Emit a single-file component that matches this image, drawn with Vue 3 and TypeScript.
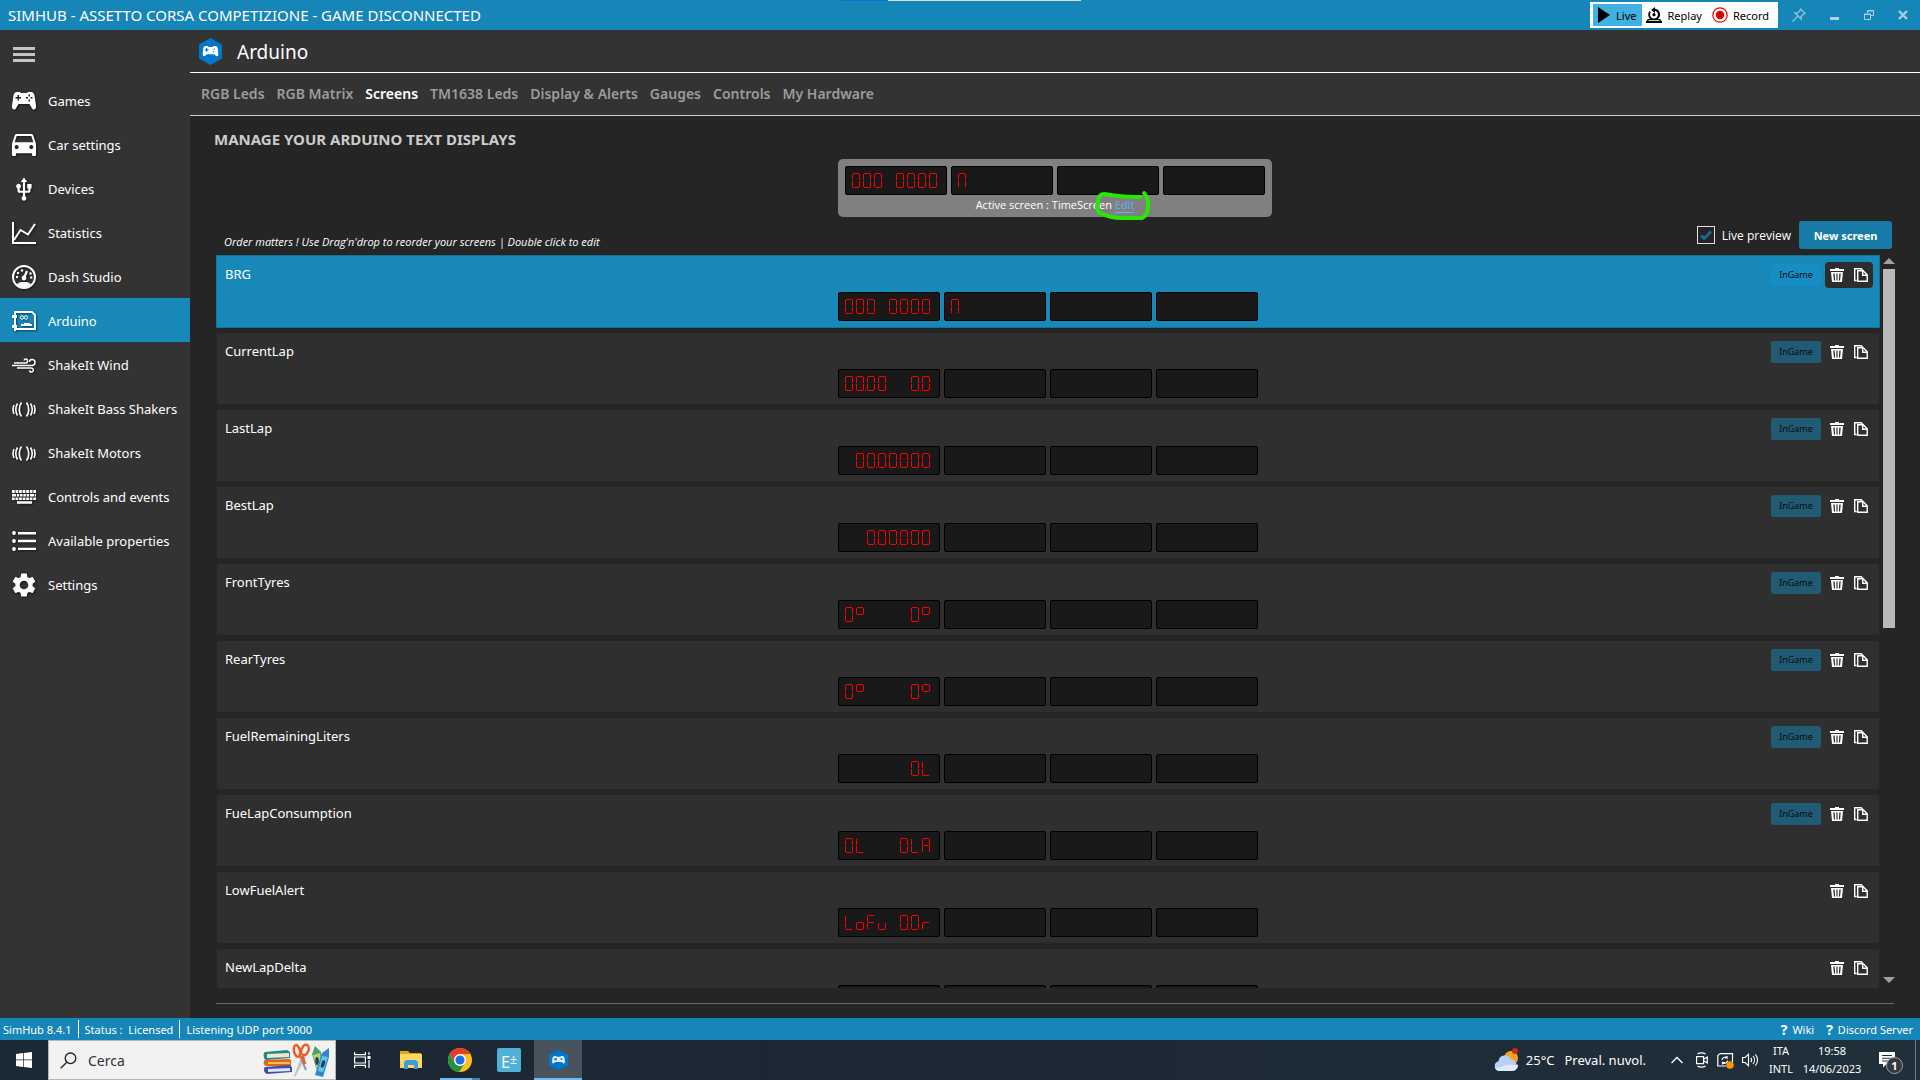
<script setup lang="ts">
import { ref } from 'vue'

interface Icon {
  box: string
  w: number
  h: number
  art: string
}
interface NavItem extends Icon {
  label: string
}
interface ScreenRow {
  name: string
  text: string[]
  inGame: boolean
}

const shaker =
  '<g fill="none" stroke="#fff" stroke-width="1.6"><path d="M9.500 .5C6.500 4.500 6.500 10.500 9.500 14.500M14.500 .5C17.500 4.500 17.500 10.500 14.500 14.500M5.500 1.500C3.500 5 3.500 10 5.500 13.500M18.500 1.500C20.500 5 20.500 10 18.500 13.500M2 3C.7 6 .7 9 2 12M22 3C23.300 6 23.300 9 22 12"/></g>'

const nav: NavItem[] = [
  {
    label: 'Games', box: '0 0 24 18', w: 24, h: 18,
    art: '<path fill="#fff" fill-rule="evenodd" d="M5 0h3l1 1h6l1-1h3c2 0 3 1.500 3.500 3.500L24 13.500c.3 2.500-.5 4-2 4-1 0-1.600-.6-2-1.300L17.500 12h-11L4 16.200c-.4.7-1 1.300-2 1.300-1.500 0-2.300-1.500-2-4L1.500 3.500C2 1.500 3 0 5 0zM5.500 3v2h-2v1.500h2v2H7v-2h2V5H7V3zM16.500 2.500v2h1.500v-2zm0 5v2h1.500v-2zM14 5v1.500h2V5zm4.500 0v1.500h2V5z"/>'
  },
  {
    label: 'Car settings', box: '3 5 18 16', w: 24, h: 22,
    art: '<path fill="#fff" d="M18.920 6.010C18.720 5.420 18.160 5 17.500 5h-11c-.66 0-1.210.42-1.420 1.010L3 12v8c0 .55.45 1 1 1h1c.55 0 1-.45 1-1v-1h12v1c0 .55.45 1 1 1h1c.55 0 1-.45 1-1v-8l-2.080-5.990zM6.500 16c-.83 0-1.500-.67-1.500-1.500S5.670 13 6.500 13s1.500.67 1.500 1.500S7.330 16 6.500 16zm11 0c-.83 0-1.500-.67-1.500-1.500s.67-1.500 1.500-1.500 1.500.67 1.500 1.500-.67 1.500-1.500 1.500zM5 11l1.500-4.500h11L19 11H5z"/>'
  },
  {
    label: 'Devices', box: '0 0.5 24 22', w: 26, h: 24,
    art: '<path fill="#fff" d="M15 7v4h1v2h-3V5h2l-3-4-3 4h2v8H8v-2.070c.7-.37 1.200-1.080 1.200-1.930 0-1.210-.99-2.200-2.200-2.200S4.800 7.790 4.800 9c0 .85.5 1.560 1.200 1.930V13c0 1.110.89 2 2 2h3v3.050c-.71.37-1.200 1.100-1.200 1.950 0 1.220.99 2.200 2.200 2.200s2.200-.98 2.200-2.200c0-.85-.49-1.580-1.200-1.950V15h3c1.110 0 2-.89 2-2v-2h1V7h-4z"/>'
  },
  {
    label: 'Statistics', box: '0 0 24 22', w: 24, h: 22,
    art: '<path fill="none" stroke="#fff" stroke-width="2" d="M1 0v21h23M2 18L8.500 8l7.500 4.500L23 2"/>'
  },
  {
    label: 'Dash Studio', box: '0 0 24 24', w: 24, h: 24,
    art: '<circle cx="12" cy="12" r="11" fill="none" stroke="#fff" stroke-width="2"/><path fill="#fff" d="M5 20c1-3 4-3 7-3s6 0 7 3c-2 2-4 3-7 3s-5-1-7-3z"/><path d="M12.500 12L15 6" stroke="#fff" stroke-width="2.200"/><circle cx="12" cy="13" r="2.400" fill="#fff"/><g fill="#fff"><circle cx="10" cy="5.500" r="1.200"/><circle cx="6" cy="8" r="1.200"/><circle cx="5" cy="12" r="1.200"/><circle cx="18.500" cy="8.500" r="1.200"/><circle cx="19.200" cy="12.500" r="1.200"/></g>'
  },
  {
    label: 'Arduino', box: '0 0 24 20', w: 24, h: 20,
    art: '<path fill="none" stroke="#fff" stroke-width="2" d="M3 1h17l3 3v14H4M3 0v20"/><path fill="#fff" d="M0 4h5v3H0zM0 14h5v3H0zM9 13h11v2H9zM12 12h6v1h-6z"/><circle cx="10" cy="6.500" r="1.700" fill="none" stroke="#fff"/><circle cx="14" cy="6.500" r="1.700" fill="none" stroke="#fff"/>'
  },
  {
    label: 'ShakeIt Wind', box: '0 0 24 15', w: 24, h: 15,
    art: '<path fill="none" stroke="#fff" stroke-width="1.500" d="M2 5h12c2 0 2-4 0-4-1 0-1.800.6-1.800 1.600M0 7.500h20c4 0 4-6 0-6-1.500 0-2.500 1-2.500 2.500M5 10h14c3 0 3 4 .5 4-1.200 0-2-.8-2-1.800"/>'
  },
  { label: 'ShakeIt Bass Shakers', box: '0 0 24 15', w: 24, h: 15, art: shaker },
  { label: 'ShakeIt Motors', box: '0 0 24 15', w: 24, h: 15, art: shaker },
  {
    label: 'Controls and events', box: '0 0 24 14', w: 24, h: 14,
    art: '<g stroke="#fff" fill="none"><path stroke-width="3" stroke-dasharray="2.700 .85" d="M0 1.500h24"/><path stroke-width="2.600" stroke-dasharray="4 .8 2.500 .8 2.500 .8 2.500 .8 2.500 .8" d="M0 5.300h24"/><path stroke-width="2.600" stroke-dasharray="2.700 .85" d="M0 8.700h24"/><path stroke-width="2.500" d="M5 12.500h15"/></g>'
  },
  {
    label: 'Available properties', box: '0 0 24 20', w: 24, h: 20,
    art: '<g fill="#fff"><circle cx="2" cy="2" r="1.900"/><circle cx="2" cy="10" r="1.900"/><circle cx="2" cy="18" r="1.900"/><path d="M6 1h18v2.400H6zM6 8.800h18v2.400H6zM6 16.700h18v2.400H6z"/></g>'
  },
  {
    label: 'Settings', box: '2 2 20 20', w: 24, h: 24,
    art: '<path fill="#fff" d="M19.140 12.940c.04-.3.06-.61.06-.94 0-.32-.02-.64-.07-.94l2.030-1.580c.18-.14.23-.41.12-.61l-1.920-3.320c-.12-.22-.37-.29-.59-.22l-2.390.96c-.5-.38-1.030-.7-1.620-.94l-.36-2.540c-.04-.24-.24-.41-.48-.41h-3.840c-.24 0-.43.17-.47.41l-.36 2.540c-.59.24-1.130.57-1.620.94l-2.390-.96c-.22-.08-.47 0-.59.22L2.740 8.870c-.12.21-.08.47.12.61l2.030 1.580c-.05.3-.09.63-.09.94s.02.64.07.94l-2.030 1.580c-.18.14-.23.41-.12.61l1.920 3.320c.12.22.37.29.59.22l2.390-.96c.5.38 1.030.7 1.620.94l.36 2.540c.05.24.24.41.48.41h3.840c.24 0 .44-.17.47-.41l.36-2.540c.59-.24 1.130-.56 1.620-.94l2.390.96c.22.08.47 0 .59-.22l1.920-3.320c.12-.22.07-.47-.12-.61l-2.010-1.580zM12 15.600c-1.980 0-3.600-1.620-3.600-3.600s1.620-3.600 3.600-3.600 3.600 1.620 3.600 3.600-1.620 3.600-3.600 3.600z"/>'
  }
]

const tabs = ['RGB Leds', 'RGB Matrix', 'Screens', 'TM1638 Leds', 'Display & Alerts', 'Gauges', 'Controls', 'My Hardware']
const activeNav = ref('Arduino')
const activeTab = ref('Screens')
const selected = ref('BRG')
const livePreview = ref(true)

const activeScreen = ['000 0000', 'N', '', '']
const screens: ScreenRow[] = [
  { name: 'BRG', text: ['000 0000', 'N', '', ''], inGame: true },
  { name: 'CurrentLap', text: ['00.00  0.0', '', '', ''], inGame: true },
  { name: 'LastLap', text: [' 00.00.000', '', '', ''], inGame: true },
  { name: 'BestLap', text: ['  0.00.000', '', '', ''], inGame: true },
  { name: 'FrontTyres', text: ['0°    0°', '', '', ''], inGame: true },
  { name: 'RearTyres', text: ['0°    0°', '', '', ''], inGame: true },
  { name: 'FuelRemainingLiters', text: ['      0L', '', '', ''], inGame: true },
  { name: 'FueLapConsumption', text: ['0L   0LA', '', '', ''], inGame: true },
  { name: 'LowFuelAlert', text: ['LoFu 0.0r', '', '', ''], inGame: false },
  { name: 'NewLapDelta', text: ['', '', '', ''], inGame: false }
]

// Lit LEDs of a seven segment digit, a (top) clockwise to f, g in the middle.
const segmentMap: Record<string, string> = {
  '0': 'abcdef', N: 'abcef', L: 'def', A: 'abcefg', o: 'cdeg', F: 'aefg', u: 'cde', r: 'eg', '°': 'abfg', ' ': ''
}

function digits(text: string): string[] {
  const out: string[] = []
  for (const ch of text) {
    if (ch === '.') out[out.length - 1] += 'p'
    else out.push(segmentMap[ch] ?? '')
  }
  return out
}
</script>

<template>
  <div class="desktop">
    <header class="titlebar">
      <span class="title">SIMHUB - ASSETTO CORSA COMPETIZIONE - GAME DISCONNECTED</span>
      <i class="behind"></i>
      <div class="modes">
        <button class="mode on">
          <svg width="12" height="16" viewBox="0 0 12 16"><path d="M0 0l12 8-12 8z" /></svg>Live
        </button>
        <button class="mode">
          <svg width="16" height="16" viewBox="0 0 16 16"><path d="M0 16v-1.500l2-2.500h2.200a5.800 5.800 0 0 1-.7-8l1.300 1.200A4 4 0 1 0 9 3.700V6L5 3l4-3v1.800a5.700 5.700 0 0 1 2.800 10.200H14l2 2.500V16z" /><circle cx="8" cy="7.700" r="1.600" /><path d="M2.500 13.500h11" stroke="#fff" stroke-width=".8" /></svg>Replay
        </button>
        <button class="mode">
          <svg width="16" height="16" viewBox="0 0 16 16"><circle cx="8" cy="8" r="7.200" fill="none" stroke="#e00000" stroke-width="1.200" /><circle cx="8" cy="8" r="4.200" fill="#e00000" /></svg>Record
        </button>
      </div>
      <div class="winbtns">
        <button aria-label="Pin"><svg width="14" height="14" viewBox="0 0 14 14" fill="none" stroke="#8cc6de" stroke-width="1.300"><path d="M8.500 1l4.500 4.500-1.500.5-2.500 2.500.2 2.500L3 5l2.500.2L8 2.500zM5.500 8.500L.5 13.500" /></svg></button>
        <button aria-label="Minimize"><svg width="10" height="10" viewBox="0 0 10 10"><path d="M0 7h9v3H0z" fill="#a9d3e6" /></svg></button>
        <button aria-label="Restore"><svg width="10" height="10" viewBox="0 0 10 10" fill="none" stroke="#a9d3e6"><path d="M3.500 3V.5h6v5H7M.5 4.500h6v5h-6zM3 1h7M0 4h7" /></svg></button>
        <button aria-label="Close"><svg width="10" height="10" viewBox="0 0 10 10"><path d="M1 1l8 8M9 1L1 9" stroke="#a9d3e6" stroke-width="2.200" /></svg></button>
      </div>
    </header>

    <div class="body">
      <nav class="sidebar">
        <button class="burger" aria-label="Menu"><i></i><i></i><i></i></button>
        <a v-for="item in nav" :key="item.label" href="#" class="nav" :class="{ on: item.label === activeNav }" @click.prevent="activeNav = item.label">
          <span class="navicon"><svg :viewBox="item.box" :width="item.w" :height="item.h" preserveAspectRatio="none" v-html="item.art"></svg></span>
          <span>{{ item.label }}</span>
        </a>
      </nav>

      <main class="main">
        <div class="head">
          <svg width="23" height="27" viewBox="0 0 23 27"><path d="M11.500 0L23 6.500v14L11.500 27 0 20.500v-14z" fill="#0077cd" /><path fill="#fff" fill-rule="evenodd" d="M6.500 8h2l1 1h4l1-1h2c1.500 0 2 1.500 2.300 3l.5 5c0 1.500-.5 2.200-1.400 2.200-1.300 0-1.700-2-3.400-2h-6c-1.700 0-2.100 2-3.400 2-.9 0-1.400-.7-1.400-2.200l.5-5C4.500 9.500 5 8 6.500 8zM7 10v1.300H5.800v1.200H7v1.300h1.200v-1.300h1.300v-1.200H8.200V10zM14.500 10.500v1.300h1.300v-1.300zM14 13v1h1v-1z" /></svg>
          <h1>Arduino</h1>
        </div>
        <div class="tabs">
          <a v-for="t in tabs" :key="t" href="#" :class="{ on: t === activeTab }" @click.prevent="activeTab = t">{{ t }}</a>
        </div>

        <section class="content">
          <h2>MANAGE YOUR ARDUINO TEXT DISPLAYS</h2>

          <div class="active">
            <div class="leds">
              <div v-for="(cell, i) in activeScreen" :key="i" class="led" role="img" :aria-label="cell || 'blank'">
                <span v-for="(d, n) in digits(cell)" :key="n" class="digit"><i v-for="s in d" :key="s" :class="s"></i></span>
              </div>
            </div>
            <p>Active screen : TimeScreen <a href="#">Edit</a></p>
            <svg class="scribble" width="62" height="36" viewBox="0 0 62 36"><path d="M48 9Q28 9 12 6Q6 6 6 15Q4 23 8 25Q18 30 30 30L50 30Q56 27 56 19Q57 11 52 5" /></svg>
          </div>

          <div class="toolbar">
            <em>Order matters ! Use Drag'n'drop to reorder your screens | Double click to edit</em>
            <label class="check"><input v-model="livePreview" type="checkbox" /><svg width="18" height="18" viewBox="0 0 18 18"><path v-if="livePreview" d="M3.500 9.500l3.500 3.500L14.500 5" /></svg>Live preview</label>
            <button class="primary">New screen</button>
          </div>

          <div class="listwrap">
            <ul class="list">
              <li v-for="row in screens" :key="row.name" class="row" :class="{ on: row.name === selected }" @click="selected = row.name">
                <div class="rowtop">
                  <span class="name">{{ row.name }}</span>
                  <span v-if="row.inGame" class="pill">InGame</span>
                  <span class="tools">
                    <button aria-label="Delete"><svg width="14" height="14" viewBox="0 0 14 14"><path fill="#fff" fill-rule="evenodd" d="M5 0h4v1h5v2H0V1h5zM1 4h12l-1 10H2zM3.300 5.500l.6 7h1.200l-.4-7zM6.400 5.500v7h1.200v-7zM9.300 5.500l-.4 7h1.200l.6-7z" /></svg></button>
                    <button aria-label="Duplicate"><svg width="14" height="14" viewBox="0 0 14 14" fill="none" stroke="#fff" stroke-width="1.400"><path d="M3.700 2.700h5.500l4 4v6.600H3.700zM8.700 3v4.300h4.500M2.700 12.500h-2V.7h6.500l2 2" /></svg></button>
                  </span>
                </div>
                <div class="leds">
                  <div v-for="(cell, i) in row.text" :key="i" class="led" role="img" :aria-label="cell || 'blank'">
                    <span v-for="(d, n) in digits(cell)" :key="n" class="digit"><i v-for="s in d" :key="s" :class="s"></i></span>
                  </div>
                </div>
              </li>
            </ul>
            <div class="scroll">
              <i class="up"></i>
              <div class="track"><div class="thumb"></div></div>
              <i class="down"></i>
            </div>
          </div>
          <div class="rule"></div>
        </section>
      </main>
    </div>

    <footer class="status">
      <span>SimHub 8.4.1</span><i></i><span>Status :&nbsp; Licensed</span><i></i><span>Listening UDP port 9000</span>
      <a href="#" class="first"><b>?</b>Wiki</a>
      <a href="#"><b>?</b>Discord Server</a>
    </footer>

    <div class="taskbar">
      <button class="start" aria-label="Start"><svg width="16" height="16" viewBox="0 0 16 16"><path fill="#fff" d="M0 2l7-1v6.600H0zM7.700 1L16 0v7.600H7.700zM0 8.300h7V15l-7-1zM7.700 8.300H16V16l-8.300-1z" /></svg></button>
      <div class="search">
        <svg width="17" height="17" viewBox="0 0 17 17" fill="none" stroke="#222" stroke-width="1.300"><circle cx="10.500" cy="6.300" r="5.300" /><path d="M6.700 10.200L.7 16.200" /></svg>
        <input type="text" placeholder="Cerca" aria-label="Cerca" />
        <svg width="68" height="36" viewBox="0 0 68 36">
          <path d="M3 10l22-2 3 2v6l-24 2c-3-1-3-7-1-8z" fill="#1d8a85" /><path d="M5 12l22-1v4L5 16z" fill="#f3e6cf" />
          <path d="M3 18l24-1 2 1v6H4c-3-1-3-5-1-6z" fill="#d96a10" /><path d="M6 20h22v2H6z" fill="#ffb45e" />
          <path d="M3 25l24-2 3 2v5L5 32c-3-1-4-5-2-7z" fill="#3c4fae" /><path d="M6 27l22-1v3L6 30z" fill="#dfe6fb" />
          <path d="M44 15L33 35l-1-1 8-21z" fill="#b9c3cf" /><path d="M38 14l6 14" stroke="#8e99a6" stroke-width="2" />
          <ellipse cx="35" cy="9" rx="3" ry="6" transform="rotate(-12 35 9)" fill="none" stroke="#ee5a24" stroke-width="2.500" /><ellipse cx="43" cy="8" rx="3.500" ry="5.500" transform="rotate(20 43 8)" fill="none" stroke="#ee5a24" stroke-width="2.500" />
          <path d="M40 14l3 8" stroke="#ee5a24" stroke-width="3" />
          <path d="M50 12l3-8 6 6 3 20-6 3z" fill="#4c9f70" /><path d="M51 13l7-2 2 16-5 1z" fill="#b5d66a" /><ellipse cx="55" cy="19" rx="1.800" ry="4" fill="#23405e" />
          <path d="M60 11l7-5v9l-6 20-8-2z" fill="#2f86c9" /><path d="M60 14l6 1-5 15-5-1z" fill="#69c6ea" /><ellipse cx="61" cy="22" rx="1.800" ry="4" transform="rotate(18 61 22)" fill="#23405e" />
        </svg>
      </div>
      <button class="task" aria-label="Task view"><svg width="17" height="16" viewBox="0 0 17 16" fill="none" stroke="#fff" stroke-width="1.200"><path d="M.6 0v2.600h10.800V0M.6 16v-2.600h10.800V16M.6 5h10.800v6H.6zM15 0v3M15 8v8" /><path d="M13.500 4h3v3h-3z" fill="#fff" stroke="none" /></svg></button>
      <button class="task" aria-label="File explorer"><svg width="22" height="18" viewBox="0 0 22 18"><path fill="#e8a500" d="M0 0h8l2 2h11v4H0z" /><path fill="#ffd75e" d="M0 3h22v14H0z" /><path fill="#3e9be0" d="M4 18v-7l2-2h10l2 2v7h-4v-4H8v4z" /></svg></button>
      <button class="task chrome" aria-label="Chrome"><svg width="24" height="24" viewBox="0 0 24 24"><circle cx="12" cy="12" r="12" fill="#fbc116" /><path d="M1.600 6A12 12 0 0 1 22.400 6H12L7 15z" fill="#e33b2e" /><path d="M1.600 6L7 15a6 6 0 0 0 10 0L11 24A12 12 0 0 1 1.600 6z" fill="#229342" /><circle cx="12" cy="12" r="6" fill="#fff" /><circle cx="12" cy="12" r="4.600" fill="#1a6fe8" /></svg></button>
      <button class="task" aria-label="E plus minus"><span class="eapp">E<small>±</small></span></button>
      <button class="task cur" aria-label="SimHub"><svg width="19" height="20" viewBox="0 0 23 27" preserveAspectRatio="none"><path d="M11.500 0L23 6.500v14L11.500 27 0 20.500v-14z" fill="#0077cd" /><path fill="#dfeefa" fill-rule="evenodd" d="M6.500 8h2l1 1h4l1-1h2c1.500 0 2 1.500 2.300 3l.5 5c0 1.500-.5 2.200-1.400 2.200-1.300 0-1.700-2-3.400-2h-6c-1.700 0-2.100 2-3.400 2-.9 0-1.400-.7-1.400-2.200l.5-5C4.500 9.500 5 8 6.500 8zM6.500 11v3h3v-3zM14 11v2h2v-2z" /></svg></button>

      <div class="tray">
        <svg width="25" height="24" viewBox="0 0 25 24"><circle cx="17" cy="10" r="7" fill="#f7a024" /><circle cx="21" cy="3" r="3" fill="#c42b1c" /><path d="M5 23a5 5 0 0 1-.5-9.800A6.500 6.500 0 0 1 17 11.500 6 6 0 0 1 19 23z" fill="#b9d0f5" /><path d="M5 23a5 5 0 0 1-4-3c6 0 10-4 16-3 3 0 5 0 7-.5A6 6 0 0 1 19 23z" fill="#dfeafc" /></svg>
        <span class="weather">25°C</span><span class="weather sky">Preval. nuvol.</span>
        <svg class="chev" width="12" height="8" viewBox="0 0 12 8" fill="none" stroke="#fff" stroke-width="1.300"><path d="M.5 7L6 1.500 11.500 7" /></svg>
        <svg class="cam" width="12" height="16" viewBox="0 0 12 16" fill="none" stroke="#fff" stroke-width="1.200"><path d="M.6 4.600h7v7h-7zM8 7l3.300-2v6L8 9M1.500 2c2-1.500 6-1.500 8 0M1.500 14c2 1.500 6 1.500 8 0" /></svg>
        <svg class="upd" width="17" height="17" viewBox="0 0 17 17" fill="none" stroke="#fff" stroke-width="1.200"><path d="M3 1.600h12.500V10M3 1.600L.8 3.500V14H9M5 8a3 3 0 0 1 5-2V4M10.500 8.500a3 3 0 0 1-5 2v2M8 6h2.500M5.500 10.500H8" /><circle cx="13" cy="13" r="3.800" fill="#ff9500" stroke="none" /></svg>
        <svg class="vol" width="17" height="14" viewBox="0 0 17 14" fill="none" stroke="#fff" stroke-width="1.100"><path d="M.6 4.500h2.500L6.500 1.300v11.400L3.100 9.500H.6zM8.800 4.800c1 1.300 1 3.100 0 4.400M11 3c2 2.300 2 5.700 0 8M13.300 1.300c3 3.300 3 8.100 0 11.400" /></svg>
        <div class="two lang"><span>ITA</span><span>INTL</span></div>
        <div class="two clock"><span>19:58</span><span>14/06/2023</span></div>
        <div class="note"><svg width="16" height="16" viewBox="0 0 16 16"><path fill="#fff" fill-rule="evenodd" d="M0 0h16v12H7.500L4 15.500V12H0zM3 3v1h10V3zM3 5.700v1h10v-1zM3 8.400v1h7v-1z" /></svg><b>1</b></div>
        <i class="show"></i>
      </div>
    </div>
  </div>
</template>

<style>
body {
  background: #252525;
}
</style>

<style scoped>
* {
  box-sizing: border-box;
}
.desktop {
  height: 100vh;
  display: flex;
  flex-direction: column;
  font-family: 'Noto Sans', 'Open Sans', sans-serif;
  font-size: 13px;
  color: #fff;
  background: #252525;
  overflow: hidden;
}
button {
  font: inherit;
  color: inherit;
  background: none;
  border: 0;
  padding: 0;
}
a {
  color: inherit;
  text-decoration: none;
}
svg {
  display: block;
  flex: none;
}
h1,
h2,
p,
ul {
  margin: 0;
  padding: 0;
  font-weight: 400;
}

.titlebar {
  position: relative;
  height: 30px;
  flex: none;
  display: flex;
  align-items: center;
  background: #1685b7;
  padding: 0 12px 0 8px;
}
.title {
  font-size: 15px;
  flex: 1;
}
.behind {
  position: absolute;
  top: 0;
  left: 840px;
  width: 241px;
  height: 1px;
  background: linear-gradient(90deg, #0078d7 48px, #d5dde2 48px);
}
.modes {
  display: flex;
  background: #fff;
  height: 26px;
  padding: 2px 3px;
  color: #000;
  font-size: 11px;
}
.mode {
  display: flex;
  align-items: center;
  gap: 5px;
  padding: 0 6px 0 4px;
}
.mode.on {
  background: #41b1e1;
  gap: 6px;
  padding: 0 6px 0 5px;
}
.winbtns {
  display: flex;
  align-items: center;
  gap: 24px;
  margin-left: 14px;
}

.body {
  flex: 1;
  min-height: 0;
  display: flex;
}
.sidebar {
  width: 190px;
  flex: none;
  background: #333;
}
.burger {
  display: flex;
  flex-direction: column;
  gap: 3px;
  margin: 17px 0 16px 13px;
}
.burger i {
  width: 22px;
  height: 3px;
  background: #c4c4c4;
}
.nav {
  height: 44px;
  padding-top: 2px;
  display: flex;
  align-items: center;
}
.nav.on {
  background: #1888b9;
}
.navicon {
  width: 48px;
  display: flex;
  justify-content: center;
  filter: drop-shadow(1px 1px 1px #0008);
}

.main {
  flex: 1;
  min-width: 0;
  display: flex;
  flex-direction: column;
}
.head {
  height: 43px;
  flex: none;
  display: flex;
  align-items: center;
  gap: 15px;
  padding: 0 9px;
  background: #333;
  border-bottom: 1px solid #fff;
}
.head h1 {
  font-size: 19px;
  padding-top: 2px;
}
.tabs {
  height: 43px;
  flex: none;
  display: flex;
  align-items: center;
  gap: 12px;
  padding: 0 11px 2px;
  background: #333;
  border-bottom: 1px solid #ccc;
  font-size: 14px;
  font-weight: 600;
  color: #9c9c9c;
}
.tabs .on {
  color: #fff;
}
.content {
  flex: 1;
  min-height: 0;
  display: flex;
  flex-direction: column;
  padding: 13px 24px 14px;
}
.content h2 {
  font-size: 15px;
  line-height: 20px;
  font-weight: 700;
  color: #ccc;
}

.active {
  position: relative;
  align-self: center;
  margin-top: 10px;
  padding: 7px 7px 2px;
  border-radius: 5px;
  background: #808080;
}
.active p {
  font-family: 'Open Sans', 'Noto Sans', sans-serif;
  font-size: 11px;
  line-height: 20px;
  text-align: center;
}
.active p a {
  color: #5fb0f5;
  border-bottom: 1px solid #5fb0f5;
}
.scribble {
  position: absolute;
  left: 254px;
  top: 29px;
  fill: none;
  stroke: #27e800;
  stroke-width: 4;
  stroke-linecap: round;
  stroke-linejoin: round;
  pointer-events: none;
}
.leds {
  display: flex;
  justify-content: center;
  gap: 4px;
}
.led {
  display: flex;
  gap: 3px;
  width: 102px;
  height: 29px;
  padding: 6px;
  border: 1px solid #000;
  border-radius: 2px;
  background: #191919;
}
.digit {
  position: relative;
  width: 8px;
  height: 15px;
}
.digit i {
  position: absolute;
  background: #f00;
}
.a,
.d,
.g {
  left: 1px;
  width: 6px;
  height: 1px;
}
.a {
  top: 0;
}
.g {
  top: 7px;
}
.d {
  top: 14px;
}
.b,
.c,
.e,
.f {
  width: 1px;
  height: 6px;
}
.b,
.f {
  top: 1px;
}
.c,
.e {
  top: 8px;
}
.b,
.c {
  left: 7px;
}
.e,
.f {
  left: 0;
}
.p {
  left: 9px;
  top: 14px;
  width: 1px;
  height: 1px;
}

.toolbar {
  display: flex;
  align-items: center;
  height: 28px;
  margin-top: 4px;
  padding: 0 4px 0 10px;
}
.toolbar em {
  flex: 1;
  font-family: 'Open Sans', 'Noto Sans', sans-serif;
  font-size: 11px;
  padding-top: 12px;
}
.check {
  position: relative;
  display: flex;
  align-items: center;
  gap: 7px;
  font-family: 'Open Sans', 'Noto Sans', sans-serif;
  font-size: 12px;
}
.check input {
  position: absolute;
  left: 0;
  margin: 0;
  width: 18px;
  height: 18px;
  opacity: 0;
}
.check svg {
  border: 1px solid #e0e0e0;
  fill: none;
  stroke: #14709b;
  stroke-width: 3;
}
.primary {
  margin-left: 8px;
  width: 93px;
  height: 28px;
  border-radius: 3px;
  background: #187aa6;
  font-size: 11px;
  font-weight: 700;
}

.listwrap {
  flex: 1;
  min-height: 0;
  display: flex;
  margin: 6px 1px 15px 2px;
}
.list {
  flex: 1;
  overflow: hidden;
  list-style: none;
}
.row {
  height: 73px;
  border: 1px solid transparent;
  background: #2f2f2f padding-box;
  margin-bottom: 4px;
}
.row.on {
  background: #1888b9;
  border-color: #14719a;
}
.rowtop {
  display: flex;
  align-items: center;
  height: 26px;
  margin: 6px 6px 4px 8px;
}
.name {
  flex: 1;
  align-self: flex-start;
  line-height: 24px;
}
.pill {
  width: 50px;
  height: 22px;
  margin-right: 4px;
  border-radius: 2px;
  background: #215a73;
  color: #050d12;
  font-size: 9px;
  line-height: 22px;
  text-align: center;
}
.on .pill {
  background: #168ec5;
}
.tools {
  display: flex;
  align-items: center;
  gap: 10px;
  height: 26px;
  padding: 0 5px;
  border-radius: 4px;
}
.on .tools {
  background: #2d2d2d;
}
.scroll {
  width: 12px;
  margin-left: 3px;
  display: flex;
  flex-direction: column;
}
.up,
.down {
  border: 6px solid transparent;
}
.up {
  border-top: 0;
  border-bottom-color: #a0a0a0;
  margin: 3px 0 5px;
}
.down {
  border-bottom: 0;
  border-top-color: #a0a0a0;
  margin: 5px 0;
}
.track {
  flex: 1;
}
.thumb {
  height: 51%;
  background: #b9b9b9;
}
.rule {
  height: 1px;
  background: #666;
  margin: 0 2px;
}

.status {
  height: 22px;
  flex: none;
  display: flex;
  align-items: center;
  background: #1685b7;
  padding: 0 7px 0 3px;
  font-size: 11px;
}
.status i {
  width: 1px;
  height: 18px;
  background: #fff;
  margin: 0 6px;
}
.status a {
  display: flex;
  margin-left: 12px;
}
.status .first {
  margin-left: auto;
}
.status b {
  font-size: 14px;
  line-height: 15px;
  margin-right: 5px;
}

.taskbar {
  height: 40px;
  flex: none;
  display: flex;
  align-items: stretch;
  background: linear-gradient(90deg, #1c2a36, #1b2733 40%, #1e2c38 75%, #20303a);
}
.start,
.task {
  width: 48px;
  display: flex;
  align-items: center;
  justify-content: center;
}
.search {
  width: 288px;
  margin-right: 1px;
  display: flex;
  align-items: center;
  background: #f2f2f2;
  border: 1px solid #b5b5b5;
  padding: 0 5px 0 11px;
}
.search input {
  flex: 1;
  min-width: 0;
  border: 0;
  background: none;
  padding: 0 0 0 11px;
  font: 14px 'Noto Sans', sans-serif;
}
.search input::placeholder {
  color: #333;
}
.task {
  margin-left: 1px;
  border-bottom: 2px solid transparent;
  border-top: 2px solid transparent;
}
.chrome {
  border-image: linear-gradient(90deg, transparent 4px, #76b9ed 4px 36px, #4c80a8 36px 44px, transparent 44px) 0 0 2 0;
}
.cur {
  background: #47535d;
  border-bottom-color: #76b9ed;
}
.eapp {
  width: 24px;
  height: 24px;
  border-radius: 2px;
  background: #4fb0d8;
  font-size: 16px;
  line-height: 24px;
}
.eapp small {
  font-size: 12px;
  vertical-align: 4px;
}
.tray {
  margin-left: auto;
  display: flex;
  align-items: center;
}
.weather {
  font-size: 13px;
  margin-left: 7px;
}
.sky {
  margin-left: 10px;
}
.chev {
  margin-left: 25px;
}
.cam {
  margin-left: 13px;
}
.upd {
  margin-left: 9px;
}
.vol {
  margin-left: 8px;
}
.two {
  display: flex;
  flex-direction: column;
  align-items: center;
  font-size: 11px;
  line-height: 18px;
}
.lang {
  margin-left: 9px;
  width: 26px;
}
.clock {
  margin-left: 8px;
  width: 60px;
}
.note {
  position: relative;
  margin-left: 17px;
  width: 36px;
}
.note b {
  position: absolute;
  left: 7px;
  top: 5px;
  width: 17px;
  height: 17px;
  border: 1px solid #9aa3aa;
  border-radius: 9px;
  background: #333a40;
  font-size: 11px;
  line-height: 15px;
  text-align: center;
}
.show {
  width: 5px;
  height: 40px;
  border-left: 1px solid #6c7780;
}
</style>
